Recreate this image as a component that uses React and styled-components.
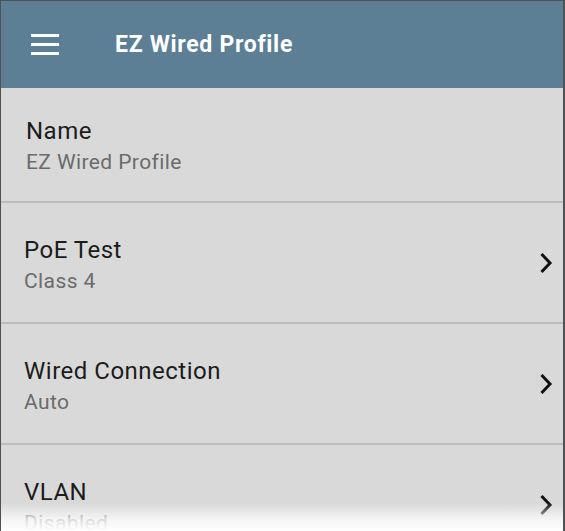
import styled, { createGlobalStyle } from "styled-components";

const GlobalStyle = createGlobalStyle`
  html, body {
    margin: 0;
    padding: 0;
    background: #ffffff;
  }
  body {
    font-family: Roboto, "Noto Sans", "Liberation Sans", sans-serif;
  }
`;

const Frame = styled.div`
  position: relative;
  width: 565px;
  height: 531px;
  box-sizing: border-box;
  border-top: 1px solid #4f5254;
  border-left: 1px solid #4f5254;
  border-right: 2px solid #4f5254;
  background: #d9d9d9;
  overflow: hidden;
`;

const Header = styled.div`
  display: flex;
  align-items: center;
  height: 87px;
  background: #5c7f96;
  color: #ffffff;
`;

const MenuButton = styled.div`
  display: flex;
  flex-direction: column;
  justify-content: space-between;
  width: 28px;
  height: 21px;
  margin-left: 30px;
  margin-top: -1px;

  span {
    display: block;
    height: 3px;
    background: #ffffff;
  }
`;

const Title = styled.h1`
  margin: 0 0 0 56px;
  font-size: 23px;
  font-weight: 700;
  line-height: 26px;
  letter-spacing: 0.7px;
`;

const Row = styled.div`
  display: flex;
  align-items: center;
  justify-content: space-between;
  box-sizing: border-box;
  height: ${(p) => p.$height}px;
  padding-left: ${(p) => p.$indent}px;
  padding-top: ${(p) => p.$shift}px;
  border-bottom: 2px solid #bdbdbd;
`;

const Texts = styled.div`
  display: flex;
  flex-direction: column;
`;

const Label = styled.div`
  font-size: 24px;
  line-height: 28px;
  letter-spacing: 0.5px;
  color: #1c1c1c;
`;

const Value = styled.div`
  margin-top: 5px;
  font-size: 21px;
  line-height: 24px;
  letter-spacing: 0.4px;
  color: #6b6b6b;
`;

const Chevron = styled.svg`
  width: 14px;
  height: 22px;
  flex: none;
  margin-right: 10px;
  margin-top: -${(p) => p.$shift}px;
`;

const Fade = styled.div`
  position: absolute;
  left: -1px;
  right: -2px;
  bottom: 0;
  height: 28px;
  background: linear-gradient(
    to bottom,
    rgba(255, 255, 255, 0) 0%,
    rgba(255, 255, 255, 0.75) 60%,
    #ffffff 100%
  );
  pointer-events: none;
`;

const rows = [
  { label: "Name", value: "EZ Wired Profile", arrow: false },
  { label: "PoE Test", value: "Class 4", arrow: true },
  { label: "Wired Connection", value: "Auto", arrow: true },
  { label: "VLAN", value: "Disabled", arrow: true },
];

function SettingRow({ label, value, arrow, first }) {
  const shift = first ? 2 : 3;
  return (
    <Row
      $height={first ? 115 : 121}
      $indent={first ? 25 : 23}
      $shift={shift}
    >
      <Texts>
        <Label>{label}</Label>
        <Value>{value}</Value>
      </Texts>
      {arrow && (
        <Chevron viewBox="0 0 14 22" $shift={shift}>
          <polyline
            points="2.5,2 11,11 2.5,20"
            fill="none"
            stroke="#111111"
            strokeWidth="3"
          />
        </Chevron>
      )}
    </Row>
  );
}

export default function App() {
  return (
    <>
      <GlobalStyle />
      <Frame>
        <Header>
          <MenuButton>
            <span />
            <span />
            <span />
          </MenuButton>
          <Title>EZ Wired Profile</Title>
        </Header>
        {rows.map((r, i) => (
          <SettingRow key={r.label} {...r} first={i === 0} />
        ))}
        <Fade />
      </Frame>
    </>
  );
}
